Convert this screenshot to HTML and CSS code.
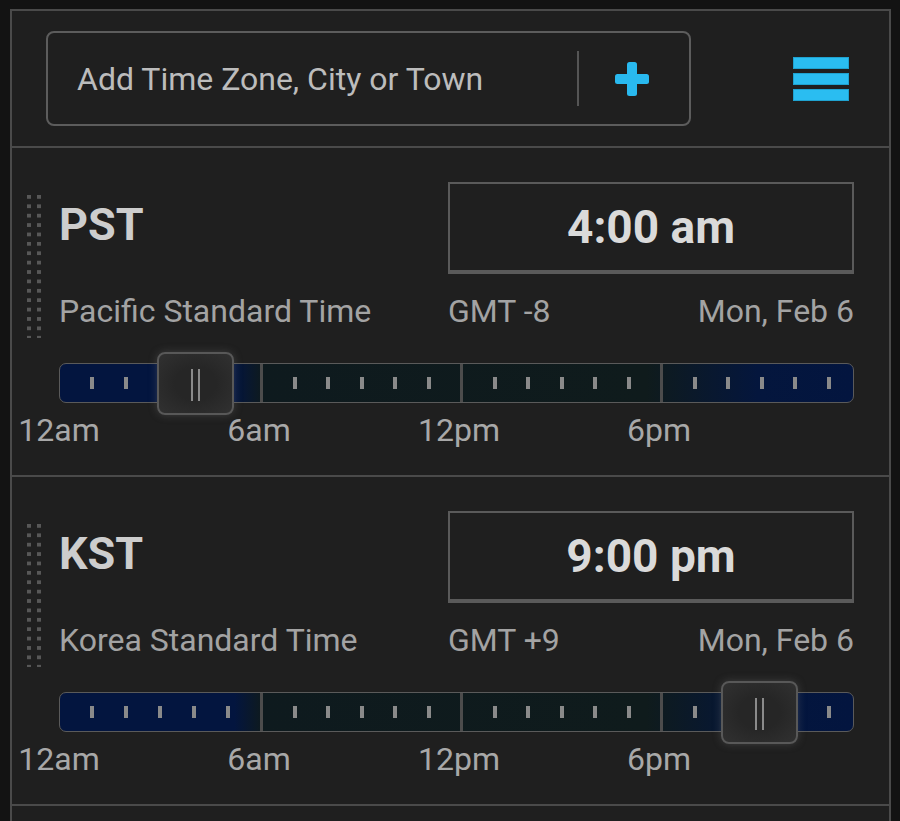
FILE: index.html
```html
<!DOCTYPE html>
<html lang="en">
  <head>
    <meta charset="UTF-8" />
    <meta name="viewport" content="width=device-width, initial-scale=1.0" />
    <title>Time Zones</title>
    <link rel="stylesheet" href="styles.css">
  </head>
  <body>
    <div class="panel">
      <!-- 顶部: 搜索 + 菜单 -->
      <div class="header">
        <div class="search">
          <span class="search-text">Add Time Zone, City or Town</span>
          <span class="search-divider"></span>
          <span class="search-add">
            <svg width="34" height="34" viewBox="0 0 34 34">
              <rect x="12" y="0" width="10" height="34" rx="2.5" fill="#29b9ef" />
              <rect x="0" y="12" width="34" height="10" rx="2.5" fill="#29b9ef" />
            </svg>
          </span>
        </div>
        <div class="menu">
          <span></span>
          <span></span>
          <span></span>
        </div>
      </div>

      <!-- PST -->
      <div class="zone">
        <div class="grip"></div>
        <div class="zone-main">
          <div class="zone-top">
            <div class="zone-abbr">PST</div>
            <div class="zone-time">4:00 am</div>
            <div class="zone-name">Pacific Standard Time</div>
            <div class="zone-info">
              <span>GMT -8</span>
              <span>Mon, Feb 6</span>
            </div>
          </div>
          <div class="bar">
            <div class="seg"><i></i><i></i><i></i><i></i><i></i></div>
            <div class="seg"><i></i><i></i><i></i><i></i><i></i></div>
            <div class="seg"><i></i><i></i><i></i><i></i><i></i></div>
            <div class="seg"><i></i><i></i><i></i><i></i><i></i></div>
            <div class="thumb" style="left: 97px"><span></span><span></span></div>
          </div>
          <div class="hours">
            <div><span>12am</span></div>
            <div><span>6am</span></div>
            <div><span>12pm</span></div>
            <div><span>6pm</span></div>
          </div>
        </div>
      </div>

      <!-- KST -->
      <div class="zone">
        <div class="grip"></div>
        <div class="zone-main">
          <div class="zone-top">
            <div class="zone-abbr">KST</div>
            <div class="zone-time">9:00 pm</div>
            <div class="zone-name">Korea Standard Time</div>
            <div class="zone-info">
              <span>GMT +9</span>
              <span>Mon, Feb 6</span>
            </div>
          </div>
          <div class="bar">
            <div class="seg"><i></i><i></i><i></i><i></i><i></i></div>
            <div class="seg"><i></i><i></i><i></i><i></i><i></i></div>
            <div class="seg"><i></i><i></i><i></i><i></i><i></i></div>
            <div class="seg"><i></i><i></i><i></i><i></i><i></i></div>
            <div class="thumb" style="left: 661px"><span></span><span></span></div>
          </div>
          <div class="hours">
            <div><span>12am</span></div>
            <div><span>6am</span></div>
            <div><span>12pm</span></div>
            <div><span>6pm</span></div>
          </div>
        </div>
      </div>
    </div>
  </body>
</html>
```

FILE: styles.css
```css
* {
  margin: 0;
  padding: 0;
  box-sizing: border-box;
}
html,
body {
  height: 100%;
  overflow: hidden;
}
body {
  background-color: #131313;
  font-family: Roboto, "Noto Sans", sans-serif;
  color: #a6a6a6;
}

.panel {
  width: 881px;
  height: calc(100% - 9px);
  margin: 9px 0 0 10px;
  overflow: hidden;
  background-color: #1f1f1f;
  border: 2px solid #4a4a4a;
  border-bottom: none;
}

/* header */

.header {
  display: flex;
  align-items: center;
  justify-content: space-between;
  padding: 20px 40px 20px 34px;
  border-bottom: 2px solid #4a4a4a;
}

.search {
  display: flex;
  align-items: center;
  width: 645px;
  height: 95px;
  border: 2px solid #5c5c5c;
  border-radius: 8px;
}
.search-text {
  flex: 1;
  padding-left: 29px;
  font-size: 32px;
  color: #bcbcbc;
}
.search-divider {
  width: 2px;
  height: 55px;
  background-color: #555;
}
.search-add {
  display: flex;
  justify-content: center;
  width: 110px;
  padding-right: 4px;
}

.menu {
  display: flex;
  flex-direction: column;
  gap: 4px;
  width: 56px;
}
.menu span {
  height: 12px;
  background-color: #2abdf1;
  box-shadow: inset 0 0 0 1px #1fa2d0;
}

/* zone */

.zone {
  display: flex;
  padding: 34px 35px 26px 15px;
  border-bottom: 2px solid #4a4a4a;
}

/* 拖拽手柄: 4px 方点 */
.grip {
  flex: none;
  width: 14px;
  height: 143px;
  margin-top: 13px;
  background: conic-gradient(at 4px 4px, transparent 75%, #575757 0) 0 0 / 10px 9.4px;
}

.zone-main {
  flex: 1;
  min-width: 0;
  margin-left: 18px;
}

.zone-top {
  display: grid;
  grid-template-columns: 1fr 405px;
  grid-template-rows: 92px auto;
  row-gap: 18px;
}

.zone-abbr {
  padding-top: 19px;
  font-size: 45px;
  line-height: 48px;
  font-weight: 700;
  color: #cdcdcd;
}

.zone-time {
  display: flex;
  align-items: center;
  justify-content: center;
  margin-left: -1px;
  border: 2px solid #5a5a5a;
  border-bottom-width: 4px;
  font-size: 46px;
  font-weight: 700;
  color: #dadada;
}

.zone-name,
.zone-info {
  font-size: 32px;
  line-height: 38px;
  color: #a3a3a3;
}
.zone-info {
  display: flex;
  justify-content: space-between;
  margin-left: -1px;
}

/* slider */

.bar {
  position: relative;
  display: flex;
  height: 40px;
  margin-top: 33px;
  border: 1px solid #5a5a5a;
  border-radius: 7px;
  background: linear-gradient(90deg, #03153f 0%, #03153f 22%, #0e1a1e 25.5%, #0f1b1c 74%, #04163d 88%, #03153f 100%);
}

/* 每段 200px, 最后一段自适应 */
.seg {
  flex: 0 0 200px;
  display: flex;
  align-items: center;
  justify-content: space-evenly;
  border-left: 3px solid #4c4c4c;
}
.seg:first-child {
  border-left: none;
}
.seg:last-child {
  flex: 1 1 0;
  min-width: 0;
}
.seg i {
  display: block;
  width: 4px;
  height: 12px;
  background-color: #8a8a8a;
}

/* 滑块盖在刻度条上 */
.thumb {
  position: absolute;
  top: -12px;
  display: flex;
  justify-content: center;
  gap: 5px;
  width: 77px;
  height: 63px;
  padding-top: 15px;
  border: 2px solid #585858;
  border-radius: 8px;
  background: radial-gradient(ellipse at center, #262626 40%, #313131 100%);
  box-shadow: 0 0 8px rgba(120, 120, 120, 0.35);
}
.thumb span {
  width: 2px;
  height: 32px;
  background-color: #8a8a8a;
}

.hours {
  display: flex;
  margin-top: 8px;
  font-size: 32px;
  line-height: 38px;
  color: #a8a8a8;
}
.hours div {
  flex: 0 0 200px;
}
.hours div:last-child {
  flex: 1 1 0;
  min-width: 0;
}
.hours span {
  display: inline-block;
  transform: translateX(-50%);
}
```
